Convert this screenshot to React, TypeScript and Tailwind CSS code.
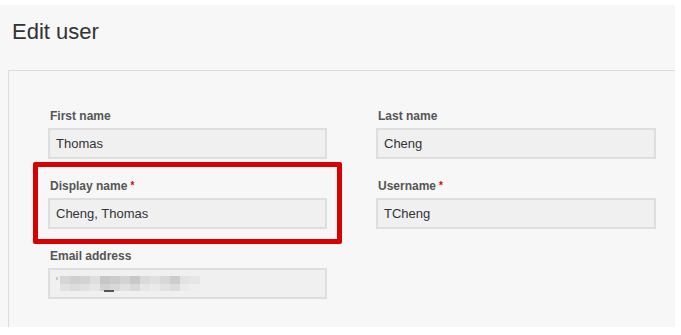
import React from "react";

const font = { fontFamily: '"Liberation Sans", Arial, sans-serif' };

function Label({ text, required }: { text: string; required?: boolean }) {
  return (
    <div className="h-[16px] leading-[16px] text-[12px] font-bold text-[#555] pl-[2px] mb-[4px] whitespace-nowrap">
      {text}
      {required && <span className="text-[#d00] text-[10px] ml-[3px] align-top">*</span>}
    </div>
  );
}

function Input({ value, children }: { value?: string; children?: React.ReactNode }) {
  return (
    <div className="h-[31px] border-2 border-[#dedede] bg-[#f0f0f0] pl-[6px] flex items-center text-[13px] text-[#333]">
      {value}
      {children}
    </div>
  );
}

function Mosaic() {
  const top = ["#d6d6d6", "#cfcfcf", "#d3d3d3", "#dedede", "#c6c6c6", "#cbcbcb", "#d3d3d3", "#c8c8c8", "#dadada", "#e0e0e0", "#d7d7d7", "#cdcdcd", "#e3e3e3", "#e6e6e6"];
  const bot = ["#e2e2e2", "#dcdcdc", "#e0e0e0", "#e6e6e6", "#d2d2d2", "#d8d8d8", "#e1e1e1", "#d9d9d9", "#e6e6e6", "#eaeaea", "#e2e2e2", "#dddddd", "#ebebeb", "#eeeeee"];
  return (
    <svg width="150" height="16" viewBox="0 0 150 16">
      {top.map((c, i) => (
        <rect key={"t" + i} x={4 + i * 10} y={0} width={10} height={8} fill={c} />
      ))}
      {bot.map((c, i) => (
        <rect key={"b" + i} x={4 + i * 10} y={8} width={10} height={7} fill={c} />
      ))}
      <rect x={0} y={1} width={2} height={3} fill="#d9c6b0" />
      <rect x={48} y={14} width={10} height={2} fill="#555" />
    </svg>
  );
}

export default function App() {
  return (
    <div className="w-[681px] h-[335px] bg-white overflow-hidden" style={font}>
      <div className="mt-[5px] w-[675px] h-[322px] bg-[#f7f7f7] flex flex-col overflow-hidden">
        <h1 className="mt-[13px] ml-[12px] h-[28px] leading-[28px] text-[22px] text-[#333] font-normal">Edit user</h1>
        <div className="mt-[24px] ml-[8px] flex-1 border-l border-t border-[#dcdcdc] pl-[39px] pt-[37px]">
          <div className="grid grid-cols-[279px_280px] gap-x-[49px] gap-y-[19px]">
            <div>
              <Label text="First name" />
              <Input value="Thomas" />
            </div>
            <div>
              <Label text="Last name" />
              <Input value="Cheng" />
            </div>
            <div className="relative">
              <div className="absolute top-[-16px] bottom-[-15px] left-[-15px] right-[-15px] border-[5px] border-[#d80000] rounded-[2px] pointer-events-none" />
              <Label text="Display name" required />
              <Input value="Cheng, Thomas" />
            </div>
            <div>
              <Label text="Username" required />
              <Input value="TCheng" />
            </div>
            <div>
              <Label text="Email address" />
              <Input>
                <Mosaic />
              </Input>
            </div>
          </div>
        </div>
      </div>
    </div>
  );
}
